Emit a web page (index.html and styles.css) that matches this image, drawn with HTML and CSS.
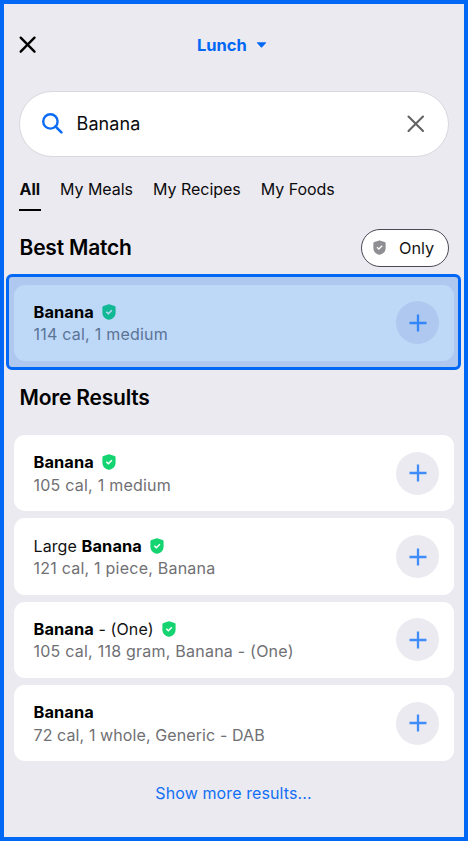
FILE: index.html
```html
<!DOCTYPE html>
<html lang="en">
<head>
<meta charset="utf-8">
<title>Lunch</title>
<link rel="stylesheet" href="styles.css">
</head>
<body>
<svg width="0" height="0" class="defs">
  <symbol id="shield" viewBox="0 0 14 16">
    <path fill="currentColor" d="M7 .3Q7.500.3 8 .6L12.600 2Q13.600 2.400 13.600 3.400V8.500C13.600 12.600 10.800 15.200 7 15.700C3.200 15.200.4 12.600.4 8.500V3.400Q.4 2.400 1.400 2L6 .6Q6.500.3 7 .3Z"/>
    <path class="tick" d="M4.300 7.800L6.300 9.700L9.900 6.200" fill="none" stroke-width="1.500"/>
  </symbol>
  <symbol id="plus" viewBox="0 0 18 18">
    <path d="M9 .5V17.500M.5 9H17.500" fill="none" stroke="currentColor" stroke-width="2.300"/>
  </symbol>
</svg>
<div class="screen">
  <header class="top">
    <svg class="close" viewBox="0 0 18 18"><path d="M1.700 1.700L15.500 15.700M15.500 1.700L1.700 15.700" fill="none" stroke="#000" stroke-width="2.400" stroke-linecap="round"/></svg>
    <div class="meal"><span>Lunch</span><svg class="caret" viewBox="0 0 10 6"><path d="M.7.300H9.300Q10 .4 9.500 1L5.600 5.200Q5 5.800 4.400 5.200L.5 1Q0 .4.7.3Z" fill="#0068f5"/></svg></div>
  </header>
  <div class="search">
    <svg class="lens" viewBox="0 0 21 21"><circle cx="8.400" cy="8.400" r="7.200" fill="none" stroke="#0b6bf5" stroke-width="2.400"/><path d="M13.500 13.500L19.400 19.400" stroke="#0b6bf5" stroke-width="2.500" stroke-linecap="round"/></svg>
    <span class="query">Banana</span>
    <svg class="clear" viewBox="0 0 18 18"><path d="M1.500 1.500L16 16M16 1.500L1.500 16" fill="none" stroke="#626264" stroke-width="2.100" stroke-linecap="round"/></svg>
  </div>
  <nav class="tabs">
    <span class="tab active">All</span><span class="tab">My Meals</span><span class="tab">My Recipes</span><span class="tab">My Foods</span>
  </nav>
  <div class="head">
    <h2>Best Match</h2>
    <div class="only"><svg class="shield"><use href="#shield"/></svg><span>Only</span></div>
  </div>
  <div class="highlight">
    <div class="card">
      <div class="text"><div class="name"><b>Banana</b><svg class="shield"><use href="#shield"/></svg></div><div class="info">114 cal, 1 medium</div></div>
      <div class="add"><svg><use href="#plus"/></svg></div>
    </div>
  </div>
  <h2 class="more">More Results</h2>
  <div class="list">
    <div class="card">
      <div class="text"><div class="name"><b>Banana</b><svg class="shield"><use href="#shield"/></svg></div><div class="info">105 cal, 1 medium</div></div>
      <div class="add"><svg><use href="#plus"/></svg></div>
    </div>
    <div class="card">
      <div class="text"><div class="name"><span>Large <b>Banana</b></span><svg class="shield"><use href="#shield"/></svg></div><div class="info">121 cal, 1 piece, Banana</div></div>
      <div class="add"><svg><use href="#plus"/></svg></div>
    </div>
    <div class="card">
      <div class="text"><div class="name"><span><b>Banana</b> - (One)</span><svg class="shield"><use href="#shield"/></svg></div><div class="info">105 cal, 118 gram, Banana - (One)</div></div>
      <div class="add"><svg><use href="#plus"/></svg></div>
    </div>
    <div class="card">
      <div class="text"><div class="name"><b>Banana</b></div><div class="info tight">72 cal, 1 whole, Generic - DAB</div></div>
      <div class="add"><svg><use href="#plus"/></svg></div>
    </div>
  </div>
  <div class="show">Show more results...</div>
</div>
</body>
</html>
```

FILE: styles.css
```css
* { box-sizing: border-box; }
body { margin: 0; background: #fff; font-family: Inter, "Liberation Sans", sans-serif; color: #0b0b0d; }
.defs { position: absolute; }
svg { display: block; flex: none; }
.screen { width: 468px; height: 841px; border: 4px solid #0068f5; background: #ebeaf0; overflow: hidden; display: flex; flex-direction: column; }
.top { height: 86.500px; flex: none; padding: 32px 0 0 15px; display: flex; align-items: flex-start; }
.close { width: 18px; height: 18px; }
.meal { display: flex; align-items: center; height: 20px; margin: -1px 0 0 160px; gap: 9px; color: #0068f5; font-weight: 700; font-size: 16.500px; }
.caret { width: 11px; height: 6px; }
.search { flex: none; width: 430px; height: 66.500px; margin-left: 15px; border: 1px solid #d9d8de; border-radius: 34px; background: #fff; display: flex; align-items: center; padding: 0 23px 0 22px; }
.lens { width: 21px; height: 21px; }
.query { flex: 1; margin-left: 13.500px; font-size: 18px; letter-spacing: .1px; }
.clear { width: 18px; height: 18px; }
.tabs { display: flex; gap: 20px; margin: 21px 0 0 15px; height: 33px; flex: none; font-size: 16px; line-height: 22px; white-space: nowrap; }
.tab { letter-spacing: -.03px; }
.active { font-weight: 700; border-bottom: 2.500px solid #000; width: 22px; margin-right: -1px; padding-left: .5px; }
.head { height: 38px; flex: none; margin: 17.500px 15px 0 15.500px; display: flex; align-items: center; justify-content: space-between; }
h2 { margin: 0; font-size: 21px; line-height: 26px; font-weight: 600; letter-spacing: -.2px; color: #000; }
.only { width: 88px; height: 38px; border: 1.500px solid #4a4955; border-radius: 19px; background: #fff; display: flex; align-items: center; padding-left: 11px; font-size: 16.300px; color: #161616; }
.only .shield { width: 13px; height: 15px; color: #8e8e93; --tick: #fff; margin-right: 13px; }
.highlight { flex: none; width: 455px; height: 96px; margin: 7.500px 0 0 2px; border: 3px solid #0068f5; border-radius: 6px; background: #aec8ef; padding: 7.500px 5px; }
.highlight .card { background: #bed8f8; }
.highlight b { color: #001a3e; }
.highlight .info { color: #5a7496; }
.highlight .shield { color: #10b893; --tick: #bed8f8; }
.highlight .add { background: #aec8ef; color: #3286fa; }
.more { margin: 15px 0 0 15.500px; }
.list { margin: 24px 0 0 10px; width: 439.500px; display: flex; flex-direction: column; gap: 7.100px; }
.card { width: 439.500px; height: 76.300px; background: #fff; border-radius: 11px; display: flex; align-items: center; justify-content: space-between; padding: 0 14.500px 0 19.500px; }
.name { display: flex; align-items: center; gap: 8px; height: 23px; font-size: 16px; color: #111; letter-spacing: .1px; white-space: nowrap; }
.name b { font-weight: 700; font-size: 16.400px; color: #000; }
.shield { width: 14px; height: 16px; color: #14d471; --tick: #fff; }
.tick { stroke: var(--tick); }
.info { height: 22px; line-height: 23px; font-size: 16px; letter-spacing: .23px; color: #707074; white-space: nowrap; }
.tight { letter-spacing: .1px; }
.add { width: 43px; height: 43px; border-radius: 50%; background: #ebeaf0; color: #408dfa; display: flex; align-items: center; justify-content: center; }
.add svg { width: 18px; height: 18px; }
.show { text-align: center; margin: 21px 0 0; padding-right: 1px; font-size: 16px; letter-spacing: .1px; line-height: 22px; color: #1170f5; }
```
